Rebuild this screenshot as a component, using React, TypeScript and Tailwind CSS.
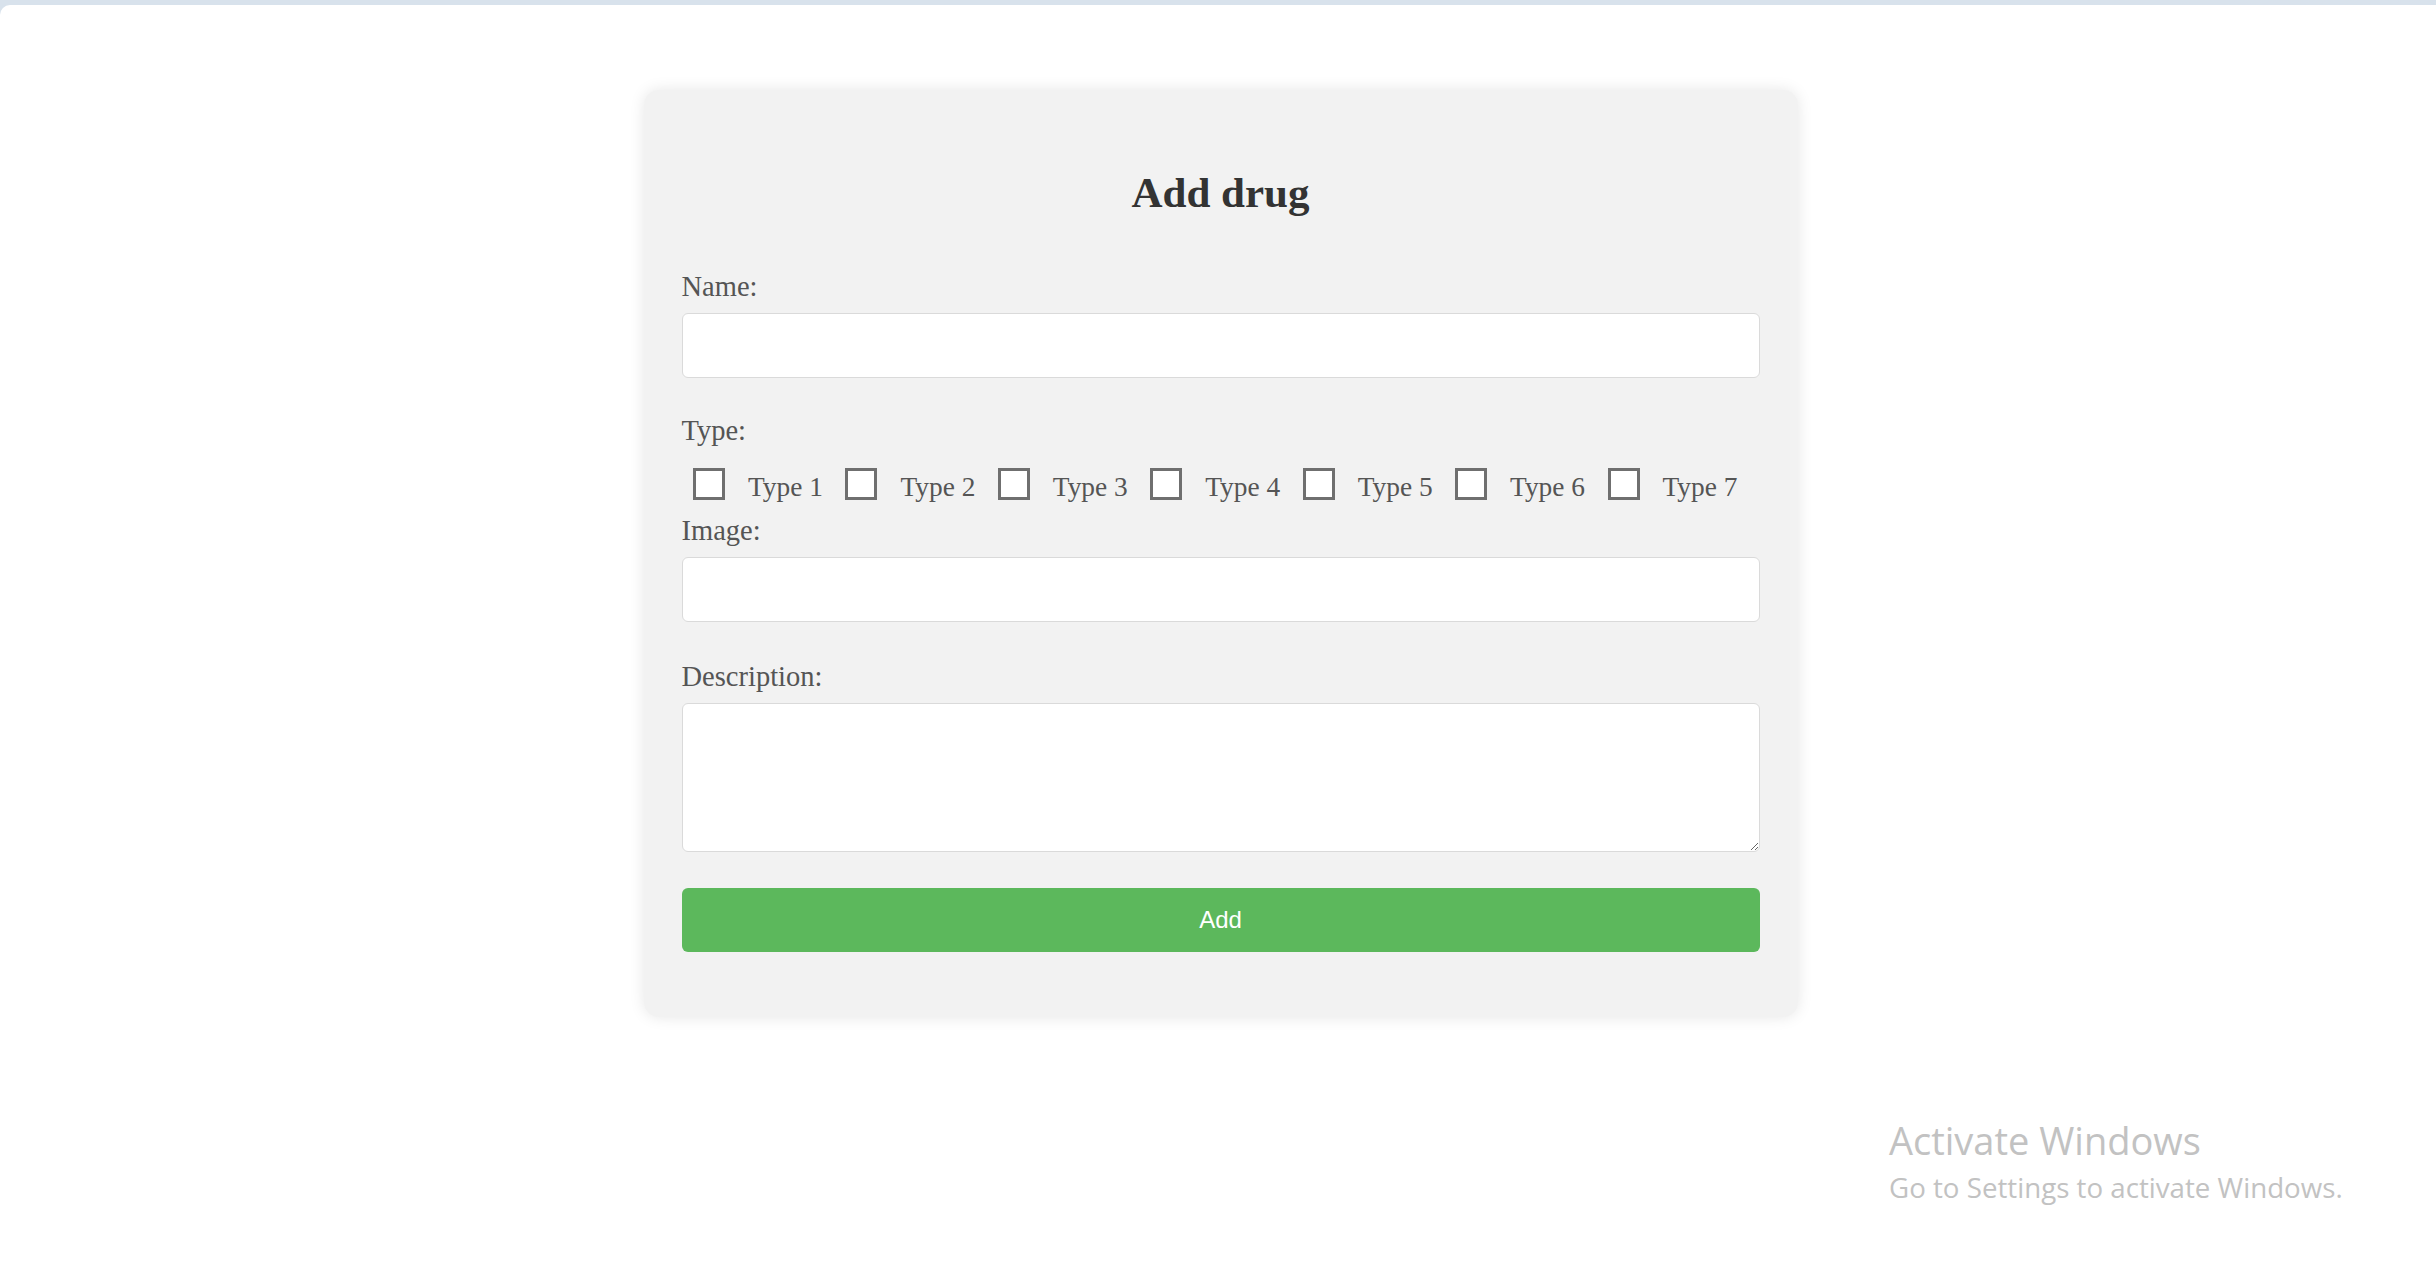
import React from "react";

const types = ["Type 1", "Type 2", "Type 3", "Type 4", "Type 5", "Type 6", "Type 7"];

export default function App() {
  return (
    <div className="min-h-screen bg-[#d8e2ec] pt-[5px] font-['Liberation_Serif',serif]">
      <div className="relative min-h-[1261px] bg-white rounded-tl-[10px] pt-[85px] pl-[5px]">
        {/* form card */}
        <div className="mx-auto w-[1154px] rounded-[15px] bg-[#f2f2f2] px-[38px] pt-[82px] pb-[65px] shadow-[0_0_15px_rgba(0,0,0,0.1)]">
          <h2 className="text-center text-[43px] leading-[42px] font-bold text-[#333]">Add drug</h2>

          <form className="flex flex-col" onSubmit={(e) => e.preventDefault()}>
            <label className="mt-[57px] text-[28.5px] leading-[31px] text-[#555]">Name:</label>
            <input
              type="text"
              className="mt-[11px] h-[65px] w-full rounded-[6px] border border-[#dadada] bg-white px-3 outline-none"
            />

            <label className="mt-[37px] text-[28.5px] leading-[31px] text-[#555]">Type:</label>
            <div className="mt-[22px] flex items-start">
              {types.map((t) => (
                <div key={t} className="flex items-start">
                  <input
                    type="checkbox"
                    className="ml-[11.5px] mr-[23px] h-[32px] w-[32px] appearance-none border-[3px] border-[#6f6f6f] bg-white"
                  />
                  <span className="mt-[4px] mr-[11px] text-[27.4px] leading-[31px] text-[#555]">{t}</span>
                </div>
              ))}
            </div>

            <label className="mt-[12px] text-[28.5px] leading-[31px] text-[#555]">Image:</label>
            <input
              type="text"
              className="mt-[11px] h-[65px] w-full rounded-[6px] border border-[#dadada] bg-white px-3 outline-none"
            />

            <label className="mt-[39px] text-[28.5px] leading-[31px] text-[#555]">Description:</label>
            <textarea className="mt-[11px] h-[149px] w-full rounded-[6px] border border-[#dadada] bg-white px-3 outline-none" />

            <button
              type="submit"
              className="mt-[36px] h-[64px] w-full rounded-[6px] bg-[#5cb85c] font-['Liberation_Sans',sans-serif] text-[24px] text-white"
            >
              Add
            </button>
          </form>
        </div>

        {/* windows watermark */}
        <div className="absolute left-[1889px] top-[1112px] font-['Open_Sans',sans-serif] text-[#c2c2c2]">
          <p className="text-[38px] leading-[46px]">Activate Windows</p>
          <p className="mt-[6px] text-[27.7px] leading-[36px]">Go to Settings to activate Windows.</p>
        </div>
      </div>
    </div>
  );
}
